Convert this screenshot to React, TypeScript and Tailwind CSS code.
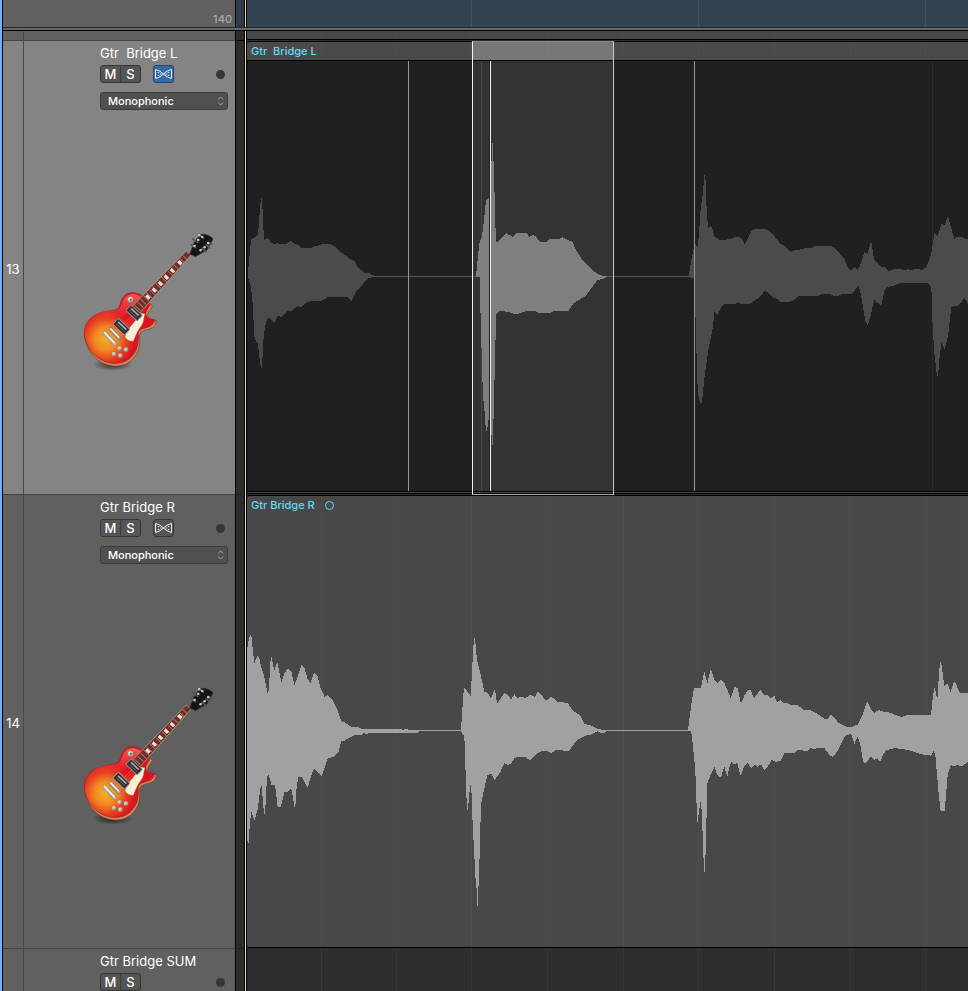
import React from "react";

/* Waveform outlines are stored on a grid three times finer than the screen. */
type Wave = { x: number; y: number; points: string };

const LEFT_QUIET: Wave[] = [
  {
    x: -7,
    y: 119,
    points:
      "23,285 25,267 33,178 45,172 54,163 60,85 63,54 66,54 72,180 83,175 95,189 103,192 113,189 118,192 137,192 153,183 163,191 173,194 185,204 212,204 225,198 238,196 247,192 272,192 285,200 302,217 318,227 327,236 344,244 353,262 373,278 387,279 395,285 410,288 410,291 395,291 382,297 370,311 348,335 334,363 323,351 265,351 245,362 212,363 197,370 185,381 172,378 155,392 140,394 125,411 113,408 103,429 87,413 80,420 75,443 70,480 66,564 63,564 58,530 54,492 50,487 43,470 38,370 33,320 25,295",
  },
  {
    x: 433,
    y: 99,
    points:
      "26,348 33,305 39,275 45,248 51,260 54,255 57,220 62,145 68,105 73,45 76,45 79,130 84,205 93,197 97,205 103,230 122,241 153,237 165,231 178,232 187,238 194,252 203,237 215,213 225,207 254,207 275,218 302,252 313,257 325,271 334,275 345,270 365,268 375,265 395,264 403,259 455,258 470,270 493,297 503,322 512,331 524,321 533,330 541,315 553,276 563,281 571,249 575,249 582,297 602,320 613,321 625,333 643,327 663,327 675,332 684,327 693,332 702,327 718,327 725,331 737,323 748,300 754,278 763,219 773,228 784,192 794,195 802,172 805,172 812,200 823,237 829,231 845,231 855,236 864,237 864,430 853,414 838,434 830,438 814,440 805,520 802,538 794,567 784,548 778,600 774,648 771,648 763,580 758,500 754,380 743,369 660,369 643,376 620,382 613,395 604,434 600,434 583,420 572,465 563,497 555,478 544,410 536,378 532,381 516,402 488,402 475,407 460,407 448,402 425,402 415,407 355,408 343,420 325,426 303,426 292,418 275,410 265,398 254,393 240,410 225,422 207,432 183,432 173,427 165,432 133,432 122,445 112,465 103,457 99,500 85,570 73,655 66,728 60,728 56,712 52,665 49,560 46,450 45,356 38,354 26,352",
  },
];

const LEFT_SELECTED: Wave = {
  x: 213,
  y: 69,
  points:
    "47,438 49,430 53,390 58,340 66,320 72,270 78,212 85,205 90,198 93,198 93,93 96,93 96,39 99,39 99,93 102,93 102,185 105,185 106,278 108,335 114,335 125,322 139,309 146,315 150,313 158,320 168,310 200,310 208,320 218,315 228,320 238,333 245,336 262,335 268,328 300,326 307,321 323,329 338,336 346,356 367,390 383,405 396,420 420,436 440,438 440,441 430,446 413,450 403,462 377,498 340,520 325,543 280,544 270,549 235,548 225,543 200,543 168,553 140,545 118,543 109,553 108,630 105,630 105,750 102,750 102,867 99,867 99,945 96,945 96,915 93,915 93,852 90,852 87,862 84,880 81,902 78,902 75,870 72,815 69,810 68,755 66,755 65,655 63,655 62,548 60,548 60,442 47,441",
};

const RIGHT: Wave[] = [
  {
    x: -7,
    y: 106,
    points:
      "20,98 25,66 30,45 34,45 37,75 43,130 52,106 57,112 65,145 74,175 82,219 85,219 88,185 91,125 94,108 97,122 103,153 112,126 115,140 124,187 133,160 143,147 154,153 163,195 173,170 184,135 193,143 203,178 212,189 222,159 233,170 242,205 254,231 263,225 275,236 292,268 304,303 315,308 334,321 356,321 365,327 485,327 487,330 500,327 510,330 600,330 600,333 540,333 533,339 390,339 380,342 370,339 362,346 342,346 325,355 313,362 304,362 296,395 283,410 263,415 245,468 242,467 223,445 215,462 203,503 185,471 175,471 170,500 166,560 163,560 156,515 152,505 142,516 133,517 123,560 113,560 105,495 95,495 85,462 81,470 75,582 72,582 65,498 61,505 53,568 43,603 34,573 30,605 26,668 24,668 20,655",
  },
  {
    x: 203,
    y: 106,
    points:
      "0,330 33,330 36,280 42,201 50,212 62,228 66,155 69,100 72,54 75,54 81,120 90,155 103,215 112,218 123,235 133,210 135,210 141,250 145,247 163,219 172,224 184,239 193,222 202,234 215,230 225,234 243,224 254,231 264,215 273,222 285,239 292,240 304,230 322,245 353,249 367,270 390,286 403,312 423,316 447,328 470,330 540,330 540,333 472,333 462,339 450,338 443,333 423,344 410,346 383,358 357,392 317,391 304,399 292,393 275,393 260,402 240,420 225,411 203,410 193,415 183,431 173,435 163,430 150,458 134,480 124,461 112,466 103,505 94,550 90,640 87,798 84,798 84,857 81,857 81,804 78,804 75,745 72,690 69,630 66,567 64,500 61,495 57,530 54,570 51,570 48,498 45,400 43,350 33,333 0,333",
  },
  {
    x: 433,
    y: 126,
    points:
      "0,270 24,270 33,200 42,144 63,144 72,96 74,96 82,130 91,90 94,90 103,120 112,129 123,120 132,127 141,147 152,175 163,141 173,145 182,187 186,185 194,165 203,151 212,151 222,175 232,162 241,150 252,164 262,166 273,174 283,168 291,187 301,180 312,189 322,189 333,195 352,195 370,209 392,211 420,226 433,237 443,237 453,222 465,235 475,248 500,261 515,261 525,256 533,255 547,225 561,186 563,186 572,205 582,219 595,210 610,215 625,216 643,224 665,231 683,225 753,225 758,175 763,144 766,150 772,180 775,130 780,66 783,66 788,100 793,138 802,130 812,156 822,123 825,127 840,158 864,158 864,366 848,377 840,378 833,375 823,378 812,376 803,405 794,513 782,513 775,450 766,345 760,333 753,347 725,343 705,337 685,330 645,324 620,330 610,342 603,362 598,362 592,354 584,359 573,350 555,372 550,367 541,315 533,289 523,312 513,280 494,289 473,332 460,350 452,349 437,330 433,324 412,324 403,328 393,324 383,332 353,331 343,338 313,338 303,361 290,366 275,360 263,380 253,390 243,373 233,380 225,375 213,384 203,369 192,378 184,405 181,405 172,369 163,373 154,366 147,385 143,408 140,405 133,378 123,413 112,405 103,381 92,405 82,430 78,600 75,695 72,695 68,585 65,510 61,483 57,515 53,545 51,545 48,430 43,360 38,310 33,272 0,272",
  },
];

function Shape({ wave, fill }: { wave: Wave; fill: string }) {
  return (
    <polygon
      points={wave.points}
      fill={fill}
      transform={`translate(${wave.x} ${wave.y}) scale(${1 / 3})`}
      shapeRendering="crispEdges"
    />
  );
}

const BEATS = [74, 149, 224, 300, 376, 451, 527, 603, 678];
const BARS = [224, 451, 678];

function GridLines({ at, color }: { at: number[]; color: string }) {
  return (
    <svg className="pointer-events-none absolute inset-0 h-full w-full" aria-hidden="true">
      {at.map((x) => (
        <rect key={x} x={x} y="0" width="1" height="100%" fill={color} />
      ))}
    </svg>
  );
}

function Playhead() {
  return <div className="w-[3px] shrink-0 border-x border-black bg-[#f7e08c]" />;
}

function FlexIcon() {
  return (
    <svg viewBox="0 0 20 16" className="h-4 w-5" fill="none" stroke="#fff" aria-hidden="true">
      <path d="M1.500 3.500v9c3-.3 5-1.500 8.500-4.500 3.500-3 5.500-4.200 8.500-4.500v9c-3-.3-5-1.500-8.500-4.500C6.500 5 4.500 3.800 1.500 3.500z" />
      <path d="M4 6.500h1.500M4 9.500h1.500M6.500 8h1.500M14.500 6.500H16M14.500 9.500H16M12 8h1.500" />
    </svg>
  );
}

function Guitar() {
  const frets = Array.from({ length: 17 }, (_, i) => i);
  return (
    <svg viewBox="0 0 480 480" className="h-40 w-40" role="img" aria-label="Electric guitar">
      <defs>
        <radialGradient id="burst" gradientUnits="userSpaceOnUse" cx="108" cy="342" r="86">
          <stop offset="0" stopColor="#f3b02c" />
          <stop offset="0.4" stopColor="#f08a22" />
          <stop offset="0.75" stopColor="#e63a20" />
          <stop offset="1" stopColor="#dc1420" />
        </radialGradient>
        <radialGradient id="floor">
          <stop offset="0" stopColor="#000" stopOpacity="0.7" />
          <stop offset="1" stopColor="#000" stopOpacity="0" />
        </radialGradient>
        <linearGradient id="chrome" x1="0" y1="0" x2="1" y2="1">
          <stop offset="0" stopColor="#fff" />
          <stop offset="1" stopColor="#808080" />
        </linearGradient>
        <linearGradient id="gloss" x1="0" y1="0" x2="0" y2="1">
          <stop offset="0" stopColor="#ff8a80" stopOpacity="0.6" />
          <stop offset="1" stopColor="#ff4030" stopOpacity="0" />
        </linearGradient>
      </defs>
      <ellipse cx="128" cy="418" rx="60" ry="20" fill="url(#floor)" />
      <path
        d="M153 238C158 215 172 204 188 204c20 0 32 9 43 22l14 16c-7 14-16 20-13 31 6 10 16 10 25 12-1 18-13 24-27 27-16 4-24 7-23 22 1 24-1 42-17 62-14 17-34 27-63 25-30-3-58-22-73-50C37 336 38 309 59 285c23-25 54-24 77-29 10-4 14-10 17-18z"
        transform="translate(2 2)"
        fill="#c98a5c"
        stroke="#7c3a20"
        strokeWidth="2"
      />
      <path
        d="M151 237C156 214 170 203 186 203c20 0 31 8 42 21l12 16c-7 13-15 20-12 31 6 11 16 12 26 12-2 15-12 22-26 25-16 4-24 8-23 23 1 23-2 41-17 60-13 17-33 26-61 24-30-3-57-22-72-49C38 336 38 307 58 284c23-25 54-24 77-29 10-4 13-10 16-18z"
        fill="url(#burst)"
        stroke="#a02020"
        strokeWidth="2"
      />
      <path d="M154 240c7-21 17-32 33-32 17 0 28 8 36 18l-28 25c-20 10-31 22-45 27-45-3-72 3-96 22 19-49 55-37 87-46 8-3 11-8 13-14z" fill="url(#gloss)" />
      <path d="M214 264l11 3c-5 14-3 24-10 34-10 13-17 27-25 48-10 1-20-5-25-14 3-12 10-18 15-28z" fill="#f6eed6" stroke="#a06a48" strokeWidth="1" />
      <g transform="translate(202 250) rotate(-47)">
        <path d="M-8-15L226-10v19L-8 15z" fill="#6f3028" stroke="#c4a890" strokeWidth="2" />
        {frets.map((i) => (
          <rect key={i} x={i * 13} y={-12 + i * 0.25} width="2" height={24 - i * 0.45} fill="#b89890" />
        ))}
        {[42, 70, 97, 123, 150, 183].map((x) => (
          <rect key={x} x={x} y="-7" width="9" height="14" fill="#e8e4de" />
        ))}
      </g>
      <path d="M359 88l13-35 17-22c6-7 28-3 40 10-4 12-14 23-18 34l-35 20-7-4z" fill="#151515" stroke="#333" strokeWidth="2" />
      <path
        d="M386 28l14 12M368 42l15 10M364 60l12 8M408 80l-12-10M420 69l-12-9M426 58l-12-6"
        stroke="#555"
        strokeWidth="5"
        strokeLinecap="round"
      />
      <g fill="url(#chrome)">
        <circle cx="388" cy="31" r="4" />
        <circle cx="385" cy="45" r="4" />
        <circle cx="397" cy="36" r="4" />
        <circle cx="374" cy="63" r="4" />
        <circle cx="392" cy="76" r="4" />
        <circle cx="404" cy="67" r="4" />
        <circle cx="415" cy="55" r="4" />
      </g>
      <path d="M118 340l80-80M123 344l80-80M128 348l80-80M133 352l80-80" stroke="#ead7a0" strokeOpacity="0.6" strokeWidth="1.5" />
      <g transform="translate(192 264) rotate(43)">
        <rect x="-23" y="-12" width="46" height="23" rx="3" fill="#2c2c2c" stroke="#8c8c8c" strokeWidth="3" />
        <path d="M-16-4h32" stroke="#a8a8a8" strokeWidth="5" />
        <path d="M-16 4h32" stroke="#5e5e5e" strokeWidth="3" />
      </g>
      <g transform="translate(154 305) rotate(43)">
        <rect x="-24" y="-12" width="48" height="24" rx="3" fill="#2c2c2c" stroke="#949494" strokeWidth="3" />
        <path d="M-17-4h34" stroke="#b0b0b0" strokeWidth="5" />
        <path d="M-17 4h34" stroke="#6a6a6a" strokeWidth="3" />
      </g>
      <g strokeLinecap="round" fill="none">
        <path d="M122 313l25 26M104 324l30 32" stroke="#8a6a48" strokeWidth="12" />
        <path d="M122 313l25 26" stroke="#a8a8a0" strokeWidth="9" />
        <path d="M104 324l30 32" stroke="#b8b8b4" strokeWidth="10" />
        <path d="M103 322l30 31M122 311l24 25" stroke="#f4f4f4" strokeWidth="4" />
      </g>
      <g fill="url(#chrome)" stroke="#8a4a28" strokeWidth="1">
        <circle cx="182" cy="224" r="9" />
        <circle cx="149" cy="370" r="7" />
        <circle cx="168" cy="374" r="7" />
        <circle cx="132" cy="387" r="7" />
        <circle cx="151" cy="392" r="7" />
      </g>
      <circle cx="182" cy="224" r="3" fill="#666" />
    </svg>
  );
}

type Track = {
  number?: string;
  name: string;
  selected?: boolean;
  flex?: boolean;
};

function TrackHeader({ track }: { track: Track }) {
  const audio = track.flex !== undefined;
  return (
    <div
      className={`flex w-[233px] shrink-0 border-r border-b border-r-black border-b-[#444444] ${
        track.selected ? "bg-[#848484]" : "bg-[#606060]"
      }`}
    >
      <div className="flex w-[21px] shrink-0 items-center justify-center border-r border-[#484848] pt-1 text-[13px] text-white">
        {track.number}
      </div>
      <div className="min-w-0 flex-1 pt-[3px]">
        <div className="pr-[7px] pl-[76px]">
          <h2 className="h-[21px] text-[13px] leading-[18px] whitespace-pre text-white">{track.name}</h2>
          <div className="flex items-center">
            <div className="flex h-[18px] w-[41px] overflow-hidden rounded-[3px] border border-[#363636] bg-[#555555] text-[13px] leading-4 font-medium text-white">
              <button type="button" aria-label="Mute" className="flex-1 border-r border-[#3c3c3c] pb-px">
                M
              </button>
              <button type="button" aria-label="Solo" className="flex-1 pb-px">
                S
              </button>
            </div>
            {audio && (
              <button
                type="button"
                aria-label="Flex"
                aria-pressed={track.flex}
                className={`ml-3 flex h-[18px] w-[21px] items-center justify-center rounded-[3px] border ${
                  track.flex ? "border-[#25466f] bg-[#3569a5]" : "border-[#363636] bg-[#555555]"
                }`}
              >
                <FlexIcon />
              </button>
            )}
            <button
              type="button"
              aria-label="Track active"
              className="mr-[3px] ml-auto h-[9px] w-[9px] rounded-full bg-[#363636]"
            />
          </div>
          {audio && (
            <div className="relative mt-[9px]">
              <select
                aria-label={`${track.name} flex mode`}
                className="block h-[18px] w-full appearance-none rounded-[3px] border border-[#3c3c3c] bg-[#505050] pl-[7px] text-[11px] leading-4 font-medium text-white"
              >
                <option>Monophonic</option>
              </select>
              <svg
                viewBox="0 0 7 10"
                className="pointer-events-none absolute top-1 right-1 h-2.5 w-[7px]"
                fill="none"
                stroke="#a4a4a4"
                aria-hidden="true"
              >
                <path d="M1 3.500L3.500 1 6 3.500M1 6.500L3.500 9 6 6.500" />
              </svg>
            </div>
          )}
        </div>
        {audio && (
          <div className="mt-[115px] ml-[46px]">
            <Guitar />
          </div>
        )}
      </div>
    </div>
  );
}

function Lane({ track, children }: { track: Track; children?: React.ReactNode }) {
  return (
    <section className={`flex shrink-0 ${track.flex === undefined ? "h-[90px]" : "h-[454px]"}`}>
      <TrackHeader track={track} />
      <div className="w-2 shrink-0 border-b border-[#222222] bg-[#2d2d2d]" />
      <Playhead />
      <div className="relative min-w-0 flex-1 bg-[#2d2d2d]">{children}</div>
    </section>
  );
}

export default function App() {
  return (
    <main className="flex h-screen overflow-hidden bg-[#2d2d2d] font-['Inter','Liberation_Sans',sans-serif] antialiased">
      <div className="w-[3px] shrink-0 border-r border-black bg-[#76aff5]" />
      <div className="flex min-w-0 flex-1 flex-col">
        <header className="flex h-[27px] shrink-0">
          <div className="flex w-[233px] shrink-0 items-end justify-end border-r border-black bg-[#606060] pr-[3px] text-[11px] leading-4 font-medium text-[#aaaaaa]">
            140
          </div>
          <div className="w-2 shrink-0 bg-[#2e3c49]" />
          <Playhead />
          <div className="relative flex-1 bg-[#344351]">
            <GridLines at={BARS} color="#42515f" />
          </div>
        </header>
        <div className="h-1 shrink-0 border-t border-b border-t-[#25282b] border-b-black bg-[#686868]" />
        <div className="flex h-2.5 shrink-0">
          <div className="flex w-[233px] shrink-0 border-r border-b border-r-black border-b-[#444444] bg-[#606060]">
            <div className="w-[21px] border-r border-[#484848]" />
          </div>
          <div className="w-2 shrink-0 border-b border-black bg-[#2d2d2d]" />
          <Playhead />
          <div className="relative mb-px flex-1 border-b border-black bg-[#484848]">
            <GridLines at={BEATS} color="#4c4c4c" />
          </div>
        </div>

        <Lane track={{ number: "13", name: "Gtr  Bridge L", selected: true, flex: true }}>
          <div className="flex h-[453px] flex-col rounded-tl-[3px] border-y border-black bg-[#4a4a4a]">
            <div className="relative h-[18px] shrink-0 pl-1 text-[11px] leading-[18px] font-medium whitespace-pre text-[#62d9f2]">
              <GridLines at={BEATS} color="#4e4e4e" />
              Gtr  Bridge L
            </div>
            <div className="mb-px min-h-0 flex-1 border-y border-black bg-[#202020]">
              <svg className="block h-full w-full" role="img" aria-label="Gtr Bridge L waveform">
                <rect x="0" y="0" width="1" height="100%" fill="#151515" />
                <rect x="685" y="0" width="1" height="100%" fill="#2b2b2b" />
                <rect x="225" y="0" width="142" height="100%" fill="#333333" />
                <rect x="234" y="0" width="1" height="100%" fill="#494949" />
                <rect x="125" y="215" width="320" height="1" fill="#555555" />
                {LEFT_QUIET.map((wave) => (
                  <Shape key={wave.x} wave={wave} fill="#4b4b4b" />
                ))}
                <Shape wave={LEFT_SELECTED} fill="#807e80" />
                <rect x="161" y="0" width="1" height="100%" fill="#979797" />
                <rect x="242" y="0" width="1" height="100%" fill="#222222" />
                <rect x="243" y="0" width="1" height="100%" fill="#f0f0f0" />
                <rect x="447" y="0" width="1" height="100%" fill="#979797" />
              </svg>
            </div>
          </div>
          <div className="pointer-events-none absolute top-0 left-[225px] h-[454px] w-[142px] border border-t-[#8a8a8a] border-r-[#c8c8c8] border-b-[#a8b0a8] border-l-[#f2f2f2]">
            <div className="h-[18px] bg-white/25" />
          </div>
        </Lane>

        <Lane track={{ number: "14", name: "Gtr Bridge R", flex: false }}>
          <div className="relative flex h-[453px] flex-col rounded-l-[3px] border-y border-black bg-[#484848]">
            <div className="flex h-[18px] shrink-0 items-center gap-[10px] pl-1 text-[11px] leading-[18px] font-medium text-[#62d9f2]">
              Gtr Bridge R
              <span className="h-[9px] w-[9px] rounded-full border border-[#62d9f2]" />
            </div>
            <svg className="block min-h-0 w-full flex-1" role="img" aria-label="Gtr Bridge R waveform">
              {RIGHT.map((wave) => (
                <Shape key={wave.x} wave={wave} fill="#a1a1a1" />
              ))}
              <rect x="190" y="216" width="250" height="1" fill="#a1a1a1" />
            </svg>
            <GridLines at={BEATS} color="rgba(255,255,255,0.03)" />
          </div>
        </Lane>

        <Lane track={{ name: "Gtr Bridge SUM" }}>
          <GridLines at={BEATS} color="#373737" />
        </Lane>
      </div>
    </main>
  );
}
